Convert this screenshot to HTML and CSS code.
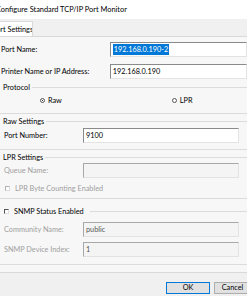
FILE: index.html
```html
<!DOCTYPE html>
<html>
<head>
<meta charset="utf-8">
<link rel="stylesheet" href="styles.css">
</head>
<body>
<div class="dlg">
  <div class="titlebar"><span class="title">Configure Standard TCP/IP Port Monitor</span></div>
  <div class="tabs"><div class="tab"><span class="tab-text">Port Settings</span></div></div>
  <div class="page">
    <div class="row r1">
      <span class="lbl">Port Name:</span>
      <div class="input wide"><span class="sel">192.168.0.190-2</span></div>
    </div>
    <div class="row r2">
      <span class="lbl">Printer Name or IP Address:</span>
      <div class="input wide">192.168.0.190</div>
    </div>

    <div class="group g-proto">
      <div class="ghead"><span class="gtitle">Protocol</span><span class="gline"></span></div>
      <div class="radios">
        <span class="radio raw"><span class="dot on"></span>Raw</span>
        <span class="radio lpr"><span class="dot"></span>LPR</span>
      </div>
    </div>

    <div class="group g-raw">
      <div class="ghead"><span class="gtitle">Raw Settings</span><span class="gline"></span></div>
      <div class="grow first">
        <span class="glbl">Port Number:</span>
        <div class="input narrow">9100</div>
      </div>
    </div>

    <div class="group g-lpr">
      <div class="ghead"><span class="gtitle">LPR Settings</span><span class="gline"></span></div>
      <div class="grow q">
        <span class="glbl dis">Queue Name:</span>
        <div class="input narrow disabled"></div>
      </div>
      <div class="check chk-lpr dis"><span class="box"></span>LPR Byte Counting Enabled</div>
    </div>

    <div class="group g-snmp">
      <div class="ghead"><span class="check snmp-check"><span class="box"></span>SNMP Status Enabled</span><span class="gline"></span></div>
      <div class="grow comm">
        <span class="glbl dis">Community Name:</span>
        <div class="input narrow disabled dtext">public</div>
      </div>
      <div class="grow idx">
        <span class="glbl dis">SNMP Device Index:</span>
        <div class="input narrow disabled dtext">1</div>
      </div>
    </div>
  </div>
  <div class="footer">
    <button class="btn ok">OK</button>
    <button class="btn cancel">Cancel</button>
  </div>
</div>
</body>
</html>
```

FILE: styles.css
```css
html, body {
  margin: 0;
  padding: 0;
}
body {
  width: 247px;
  height: 296px;
  overflow: hidden;
  background: #f0f0f0;
  font-family: Lato, "Noto Sans", "Liberation Sans", sans-serif;
  font-size: 7.3px;
  color: #000;
}
.dlg {
  width: 247px;
  height: 296px;
  display: flex;
  flex-direction: column;
}
.titlebar {
  height: 19px;
  background: #fff;
  display: flex;
  align-items: center;
  overflow: hidden;
}
.title {
  margin-left: -4px;
  font-size: 7.4px;
  white-space: nowrap;
}
.tabs {
  height: 17px;
  display: flex;
  align-items: flex-end;
  background: #f0f0f0;
}
.tab {
  height: 15px;
  width: 33px;
  background: #fff;
  border-right: 1px solid #d9d9d9;
  border-top: 1px solid #d9d9d9;
  box-sizing: border-box;
  display: flex;
  align-items: center;
  overflow: hidden;
}
.tab-text {
  margin-left: -8px;
  white-space: nowrap;
}
.page {
  border-top: 1px solid #d9d9d9;
  border-bottom: 1px solid #d9d9d9;
  background: #f7f7f7;
  padding-bottom: 7px;
}
.row {
  display: flex;
  align-items: center;
  height: 15px;
}
.r1 { margin-top: 5px; }
.r2 { margin-top: 7px; }
.lbl {
  width: 111px;
  padding-left: 1px;
  white-space: nowrap;
}
.input {
  height: 15px;
  box-sizing: border-box;
  background: #fff;
  border-top: 1px solid #8a8a8a;
  border-left: 1px solid #8a8a8a;
  border-right: 1px solid #e3e3e3;
  border-bottom: 1px solid #e3e3e3;
  display: flex;
  align-items: center;
  padding-left: 2px;
  white-space: nowrap;
}
.input.wide { width: 140px; }
.input.narrow { width: 156px; }
.input.disabled {
  background: #f4f4f4;
  border-top-color: #a8a8a8;
  border-left-color: #a8a8a8;
}
.input.dtext { color: #555; }
.sel {
  background: #0078d7;
  color: #fff;
  line-height: 11px;
  padding: 0 1px;
}
.group {
  border-bottom: 1px solid #dcdcdc;
}
.ghead {
  height: 9px;
  display: flex;
  align-items: center;
}
.gtitle {
  padding-left: 3px;
  padding-right: 2px;
  white-space: nowrap;
}
.gline {
  flex: 1;
  border-top: 1px solid #dcdcdc;
}
.g-proto { margin-top: 4px; padding-bottom: 8px; }
.radios {
  margin-top: 4px;
  height: 9px;
  display: flex;
  align-items: center;
}
.radio {
  display: flex;
  align-items: center;
  white-space: nowrap;
}
.radio.raw { margin-left: 40px; }
.radio.lpr { margin-left: 110px; }
.dot {
  width: 5px;
  height: 5px;
  border-radius: 50%;
  border: 1px solid #555;
  box-sizing: border-box;
  margin-right: 3px;
  background: #fff;
  position: relative;
}
.dot.on::after {
  content: "";
  position: absolute;
  left: 1px;
  top: 1px;
  width: 1px;
  height: 1px;
  border-radius: 50%;
  background: #000;
}
.g-raw { margin-top: 3px; padding-bottom: 6px; }
.g-lpr { margin-top: 3px; padding-bottom: 5px; }
.g-snmp { margin-top: 8px; padding-bottom: 7px; }
.grow {
  display: flex;
  align-items: center;
  height: 15px;
}
.grow.first { margin-top: 2px; }
.grow.q { margin-top: 1px; }
.grow.comm { margin-top: 6px; }
.grow.idx { margin-top: 5px; }
.glbl {
  width: 79px;
  padding-left: 4px;
  white-space: nowrap;
}
.dis { color: #a0a0a0; }
.check {
  display: flex;
  align-items: center;
  white-space: nowrap;
}
.chk-lpr {
  margin-top: 6px;
  height: 9px;
  padding-left: 5px;
}
.snmp-check {
  padding-left: 4px;
  padding-right: 6px;
}
.box {
  width: 5px;
  height: 5px;
  box-sizing: border-box;
  border-top: 1px solid #555;
  border-left: 1px solid #555;
  border-right: 1px solid #ddd;
  border-bottom: 1px solid #ddd;
  background: #fff;
  margin-right: 5px;
}
.chk-lpr .box {
  border-top-color: #b0b0b0;
  border-left-color: #b0b0b0;
}
.footer {
  display: flex;
  justify-content: flex-end;
  gap: 4px;
  padding-top: 9px;
  margin-right: -4px;
}
.btn {
  height: 12px;
  font-family: inherit;
  font-size: 7.3px;
  padding: 0;
  background: #e1e1e1;
  border: 1px solid #adadad;
  color: #000;
  line-height: 10px;
}
.btn.ok {
  width: 44px;
  border-color: #0078d7;
}
.btn.cancel {
  width: 37px;
}
```
